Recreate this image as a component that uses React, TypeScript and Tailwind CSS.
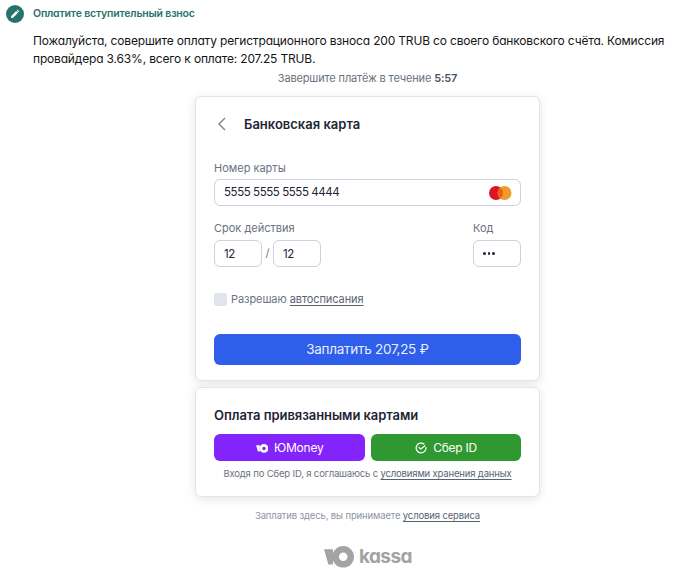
import React from "react";

const inputBox =
  "flex h-[27px] items-center rounded-[6px] border border-[#ccd1dd] bg-white px-[9px] text-[11.5px] text-[#1d2535]";
const card =
  "w-[345px] rounded-[6px] border border-[#e1e4ea] bg-white px-[18px] shadow-[0_2px_10px_rgba(30,40,70,0.12)]";

function YooMark({ className }: { className: string }) {
  return (
    <svg viewBox="0 0 30 22" className={className} fill="currentColor">
      <path d="M0 3.3H9V18.6H4.4Z" />
      <path
        fillRule="evenodd"
        d="M19.2 0A10.8 10.8 0 1 1 19.2 21.6A10.8 10.8 0 1 1 19.2 0ZM19.2 6.5A4.3 4.3 0 1 0 19.2 15.1A4.3 4.3 0 1 0 19.2 6.5Z"
      />
    </svg>
  );
}

export default function App() {
  return (
    <main className="h-[578px] w-[692px] overflow-hidden bg-white font-['Inter','Noto_Sans',sans-serif] whitespace-nowrap">
      <header className="flex h-[30px] items-start pt-[5px] pl-[6px]">
        <svg viewBox="0 0 18 18" className="size-[18px]">
          <circle cx="9" cy="9" r="9" fill="#26736d" />
          <path d="M5 13L5.3 10.9L10.2 6L12 7.8L7.1 12.7Z" fill="#fff" />
          <path d="M10.8 5.4L11.6 4.7L13.3 6.4L12.6 7.2Z" fill="#fff" />
        </svg>
        <h1 className="ml-[9px] text-[10.5px] leading-[18px] font-semibold tracking-[-0.18px] text-[#26736d] [font-feature-settings:'cv11']">
          Оплатите вступительный взнос
        </h1>
      </header>
      <div className="pt-[2px] pl-[33px] text-[12px] leading-[18px] tracking-[-0.17px] text-[#151515] [font-feature-settings:'cv11']">
        <p>Пожалуйста, совершите оплату регистрационного взноса 200 TRUB со своего банковского счёта. Комиссия</p>
        <p>провайдера 3.63%, всего к оплате: 207.25 TRUB.</p>
      </div>

      <section className="ml-[195px] w-[345px]">
        <p className="mt-[2px] h-[26px] text-center text-[11px] leading-[16px] tracking-[-0.15px] text-[#6b7280]">
          Завершите платёж в течение <b className="font-semibold text-[#4b5565]">5:57</b>
        </p>

        <div className={`${card} h-[285px]`}>
          <div className="flex items-center pt-[17px]">
            <svg viewBox="0 0 16 16" className="size-4" fill="none" stroke="#7b8290" strokeWidth="1.4">
              <path d="M11 2L5 8L11 14" />
            </svg>
            <h2 className="ml-[14px] text-[13px] leading-[20px] font-semibold text-[#1d2535]">Банковская карта</h2>
          </div>

          <div className="mt-[26px] text-[11px] leading-[16px] text-[#6b7280]">Номер карты</div>
          <div className={`${inputBox} mt-[3px] justify-between`}>
            <span className="tracking-[-0.42px]">5555 5555 5555 4444</span>
            <svg viewBox="0 0 24 14" className="-mr-[1px] h-[14px] w-[24px]">
              <circle cx="8" cy="7" r="7" fill="#dc1428" />
              <circle cx="16.5" cy="7" r="7" fill="#ee9b2a" />
              <path d="M12.25 1.5A7 7 0 0 1 12.25 12.5A7 7 0 0 1 12.25 1.5Z" fill="#ee5a1c" />
            </svg>
          </div>

          <div className="mt-[14px] flex justify-between text-[11px] leading-[16px] text-[#6b7280]">
            <div>
              <div>Срок действия</div>
              <div className="mt-[4px] flex items-center">
                <span className={`${inputBox} w-[48px] tracking-[-0.4px]`}>12</span>
                <span className="w-[11px] pb-[2px] text-center">/</span>
                <span className={`${inputBox} w-[48px] tracking-[-0.4px]`}>12</span>
              </div>
            </div>
            <div className="w-[48px]">
              <div>Код</div>
              <div className={`${inputBox} mt-[4px] gap-[2px]`}>
                <i className="size-[2.5px] rounded-full bg-[#1d2535]" />
                <i className="size-[2.5px] rounded-full bg-[#1d2535]" />
                <i className="size-[2.5px] rounded-full bg-[#1d2535]" />
              </div>
            </div>
          </div>

          <div className="mt-[24px] flex items-center text-[11px] leading-[16px] tracking-[-0.08px] text-[#6b7280]">
            <span className="mr-[4px] size-[13px] rounded-[3px] bg-[#dfe4ed]" />
            <span>
              Разрешаю <a className="text-[#596273] underline underline-offset-2">автосписания</a>
            </span>
          </div>

          <button className="mt-[27px] block h-[31px] w-full rounded-[6px] bg-[#2e5eea] text-[13.5px] tracking-[-0.28px] text-[#e9efff]">
            Заплатить 207,25 ₽
          </button>
        </div>

        <div className={`${card} mt-[6px] h-[110px]`}>
          <h2 className="pt-[17px] text-[13px] leading-[20px] font-semibold tracking-[-0.06px] text-[#1d2535]">
            Оплата привязанными картами
          </h2>
          <div className="mt-[9px] flex gap-[6px] text-[12px] tracking-[-0.25px] text-white">
            <button className="flex h-[27px] w-[151px] items-center justify-center gap-[6px] rounded-[6px] bg-[#8224fb]">
              <YooMark className="mt-px h-[9px] w-[12.5px]" />
              <span>ЮMoney</span>
            </button>
            <button className="flex h-[27px] w-[150px] items-center justify-center gap-[6px] rounded-[6px] bg-[#2f9830]">
              <svg viewBox="0 0 12 12" className="size-[12px]" fill="none" stroke="#fff" strokeWidth="1.2">
                <path d="M9.3 2.3A4.9 4.9 0 1 0 10.9 5.2" />
                <path d="M3.6 5.2L5.8 7L10.3 3.5" />
              </svg>
              <span>Сбер ID</span>
            </button>
          </div>
          <p className="mt-[6px] text-center text-[9.5px] leading-[14px] tracking-[-0.16px] text-[#6b7280]">
            Входя по Сбер ID, я соглашаюсь с{" "}
            <a className="text-[#596273] underline underline-offset-2">условиями хранения данных</a>
          </p>
        </div>

        <p className="mt-[12px] text-center text-[9.5px] leading-[14px] tracking-[-0.14px] text-[#8e949f]">
          Заплатив здесь, вы принимаете <a className="text-[#596273] underline underline-offset-2">условия сервиса</a>
        </p>
        <div className="mt-[23px] flex h-[22px] items-center pl-[129px] text-[#a3a3a3]">
          <YooMark className="h-[22px] w-[30px]" />
          <span className="ml-[5px] text-[19px] leading-[22px] font-bold tracking-[-0.6px] [font-feature-settings:'cv11']">
            kassa
          </span>
        </div>
      </section>
    </main>
  );
}
